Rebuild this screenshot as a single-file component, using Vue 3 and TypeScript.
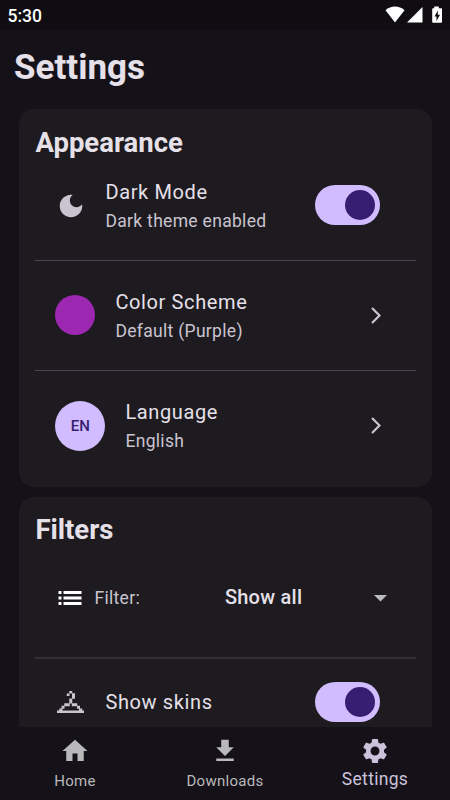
<script setup lang="ts">
import { ref } from 'vue'

interface Tab {
  id: string
  label: string
  icon: string
}

const tabs: Tab[] = [
  { id: 'home', label: 'Home', icon: 'M10 20v-6h4v6h5v-8h3L12 3 2 12h3v8z' },
  { id: 'downloads', label: 'Downloads', icon: 'M19 9h-4V3H9v6H5l7 7 7-7zM5 18v2h14v-2H5z' },
  {
    id: 'settings',
    label: 'Settings',
    icon: 'M19.14 12.94c.04-.3.06-.61.06-.94 0-.32-.02-.64-.07-.94l2.03-1.58c.18-.14.23-.41.12-.61l-1.92-3.32c-.12-.22-.37-.29-.59-.22l-2.39.96c-.5-.38-1.03-.7-1.62-.94l-.36-2.54c-.04-.24-.24-.41-.48-.41h-3.84c-.24 0-.43.17-.47.41l-.36 2.54c-.59.24-1.13.57-1.62.94l-2.39-.96c-.22-.08-.47 0-.59.22L2.74 8.87c-.12.21-.08.47.12.61l2.03 1.58c-.05.3-.09.63-.09.94s.02.64.07.94l-2.03 1.58c-.18.14-.23.41-.12.61l1.92 3.32c.12.22.37.29.59.22l2.39-.96c.5.38 1.03.7 1.62.94l.36 2.54c.05.24.24.41.48.41h3.84c.24 0 .44-.17.47-.41l.36-2.54c.59-.24 1.13-.56 1.62-.94l2.39.96c.22.08.47 0 .59-.22l1.92-3.32c.12-.22.07-.47-.12-.61l-2.01-1.58zM12 15.6c-1.98 0-3.6-1.62-3.6-3.6s1.62-3.6 3.6-3.6 3.6 1.62 3.6 3.6-1.62 3.6-3.6 3.6z',
  },
]

const activeTab = ref('settings')
const darkMode = ref(true)
const showSkins = ref(true)
</script>

<template>
  <div class="screen">
    <div class="status">
      <span class="clock">5:30</span>
      <svg class="status-icons" width="60" height="20" viewBox="0 0 60 20">
        <path d="M0.5 4.200C6 -0.600 14 -0.600 19.500 4.200L10 16.500z" />
        <path d="M37.500 1V16.500H22z" />
        <path
          fill-rule="evenodd"
          d="M49.200 .5h4.600v1.800h2.400q.8 0 .8.8V16q0 .8-.8.8h-8.200q-.8 0-.8-.8V3.100q0-.8.8-.8h1.200zM52.800 4.500L49.500 10.600h2v4.500L55 8.800h-2.200z"
        />
      </svg>
    </div>

    <h1 class="title">Settings</h1>

    <main class="content">
      <section class="card">
        <h2 class="heading">Appearance</h2>

        <div class="row mode">
          <svg class="moon" viewBox="0 0 24 24">
            <path d="M12 3c-4.970 0-9 4.030-9 9s4.030 9 9 9 9-4.030 9-9c0-.46-.04-.92-.1-1.360-.98 1.370-2.580 2.260-4.400 2.260-2.980 0-5.400-2.420-5.400-5.400 0-1.810.89-3.420 2.260-4.400C12.920 3.040 12.460 3 12 3z" />
          </svg>
          <div class="texts">
            <span class="label">Dark Mode</span>
            <span class="sub">Dark theme enabled</span>
          </div>
          <button class="switch" :class="{ on: darkMode }" aria-label="Dark Mode" @click="darkMode = !darkMode"></button>
        </div>

        <div class="row scheme">
          <span class="swatch"></span>
          <div class="texts">
            <span class="label">Color Scheme</span>
            <span class="sub">Default (Purple)</span>
          </div>
          <svg class="chevron" viewBox="0 0 10 17"><path d="M1 1L8.500 8.500L1 16" /></svg>
        </div>

        <div class="row language">
          <span class="badge">EN</span>
          <div class="texts">
            <span class="label">Language</span>
            <span class="sub">English</span>
          </div>
          <svg class="chevron" viewBox="0 0 10 17"><path d="M1 1L8.500 8.500L1 16" /></svg>
        </div>
      </section>

      <section class="card">
        <h2 class="heading">Filters</h2>

        <div class="row filter">
          <svg class="list" viewBox="0 0 23 14">
            <path d="M0 0h3v3H0zM5 0h18v3H5zM0 5.500h3v3H0zM5 5.500h18v3H5zM0 11h3v3H0zM5 11h18v3H5z" />
          </svg>
          <span class="sub filter-name">Filter:</span>
          <span class="filter-value">Show all</span>
          <svg class="caret" viewBox="0 0 13 7"><path d="M0 0h13L6.500 6.500z" /></svg>
        </div>

        <div class="row skins">
          <svg class="hanger" viewBox="0 0 11 9">
            <path d="M4.900 0h1.200v1H4.900zM3.900 1h1.100v1H3.900zM6 .9h1.200v2.200H6zM4.900 3h1.200v2H4.900zM2.900 4.900h2.200v1.200H2.900zM5.900 4.900h2.200v1.200H5.900zM1.800 5.900h1.200v1.200H1.800zM8 5.900h1.200v1.200H8zM.9 7h1.300v1H.9zM8.800 7h1.300v1H8.800zM0 7.800h11v1.200H0z" />
          </svg>
          <div class="texts"><span class="label">Show skins</span></div>
          <button class="switch" :class="{ on: showSkins }" aria-label="Show skins" @click="showSkins = !showSkins"></button>
        </div>
      </section>
    </main>

    <nav class="nav">
      <button
        v-for="tab in tabs"
        :key="tab.id"
        class="tab"
        :class="{ active: tab.id === activeTab }"
        @click="activeTab = tab.id"
      >
        <svg viewBox="0 0 24 24"><path :d="tab.icon" /></svg>
        <span>{{ tab.label }}</span>
      </button>
    </nav>
  </div>
</template>

<style>
body {
  background: #141218;
}
</style>

<style scoped>
.screen {
  display: flex;
  flex-direction: column;
  height: 800px;
  width: 450px;
  overflow: hidden;
  background: #141218;
  color: #e6e0e9;
  font-family: Roboto, 'Liberation Sans', sans-serif;
}

button {
  border: 0;
  padding: 0;
  font: inherit;
  color: inherit;
  background: none;
}

.status {
  flex: none;
  display: flex;
  justify-content: space-between;
  height: 30px;
  padding: 6px 5px 0 7.500px;
  box-sizing: border-box;
  background: #0f0d12;
  color: #fff;
}

.clock {
  font-size: 17.5px;
  font-weight: 500;
  line-height: 21px;
}

.status-icons {
  fill: #fff;
}

.title {
  flex: none;
  margin: 0;
  height: 79px;
  padding: 15px 14px 0;
  box-sizing: border-box;
  font-size: 35px;
  font-weight: 700;
  line-height: 45px;
}

.content {
  flex: 1;
  min-height: 0;
  overflow: hidden;
  display: flex;
  flex-direction: column;
  gap: 10px;
  padding: 0 18.500px 0 19px;
}

.card {
  flex: none;
  padding: 16px 16px 0 16.400px;
  border-radius: 15px;
  background: #1d1b20;
}

.card + .card {
  padding-top: 15.300px;
}

.heading {
  margin: 0;
  font-size: 27.500px;
  font-weight: 700;
  line-height: 35px;
}

.row {
  display: flex;
  align-items: center;
  box-sizing: border-box;
  padding: 0 35.500px 0 20px;
}

.mode {
  height: 101px;
  padding-bottom: 10px;
}

.mode,
.scheme {
  border-bottom: 1.500px solid #49454f;
}

.scheme {
  height: 110px;
  padding-bottom: 1px;
}

.language {
  height: 115.500px;
  padding-bottom: 6.500px;
}

.texts {
  flex: 1;
  display: flex;
  flex-direction: column;
}

.label {
  font-size: 20px;
  line-height: 30px;
  letter-spacing: 0.625px;
}

.sub {
  font-size: 17.500px;
  line-height: 27px;
  letter-spacing: 0.3125px;
  color: #cac4d0;
}

.texts .sub {
  margin-bottom: -1px;
  padding-top: 1px;
}

.moon {
  width: 30px;
  height: 30px;
  margin: 1px 19.500px 0 0.500px;
  fill: #cac4d0;
}

.swatch {
  width: 40px;
  height: 40px;
  margin-right: 20px;
  border-radius: 50%;
  background: #9c27b0;
}

.badge {
  display: grid;
  place-items: center;
  width: 50px;
  height: 50px;
  margin-right: 20px;
  border-radius: 50%;
  background: #d0bcff;
  color: #381e72;
  font-size: 15px;
  font-weight: 500;
  line-height: 18px;
}

.switch {
  display: flex;
  align-items: center;
  box-sizing: border-box;
  width: 65px;
  height: 40px;
  padding: 5px;
  border-radius: 20px;
  background: #49454f;
}

.switch::before {
  content: '';
  width: 30px;
  height: 30px;
  border-radius: 50%;
  background: #938f99;
}

.switch.on {
  justify-content: flex-end;
  background: #d0bcff;
}

.switch.on::before {
  background: #381e72;
}

.chevron {
  width: 10px;
  height: 17px;
  margin-right: -0.500px;
  fill: none;
  stroke: #cac4d0;
  stroke-width: 2.200;
}

.filter {
  height: 111.800px;
  padding: 0 29px 7px 23px;
  border-bottom: 2px solid #323035;
}

.list {
  width: 24px;
  height: 14px;
  margin-right: 12px;
  fill: #fff;
}

.filter-name {
  flex: none;
  width: 130.500px;
  padding-top: 1px;
}

.filter-value {
  flex: 1;
  margin-top: -1.500px;
  font-size: 20px;
  font-weight: 500;
  letter-spacing: 0.250px;
}

.caret {
  width: 13px;
  height: 7px;
  margin-top: 1px;
  fill: #bbb;
}

.skins {
  height: 87px;
}

.hanger {
  width: 27.500px;
  height: 22.500px;
  margin: 0 21.200px 0 1.300px;
  fill: #cac4d0;
}

.nav {
  flex: none;
  display: flex;
  height: 73px;
}

.tab {
  flex: 1;
  display: flex;
  flex-direction: column;
  align-items: center;
  padding-top: 9px;
  color: #b9b8ba;
}

.tab svg {
  width: 30px;
  height: 30px;
  fill: currentColor;
}

.tab span {
  margin-top: 5px;
  font-size: 15px;
  line-height: 20px;
  letter-spacing: 0.300px;
}

.tab.active {
  color: #ccc2dc;
}

.tab.active span {
  margin-top: 3px;
  font-size: 17.500px;
  letter-spacing: 0.300px;
}
</style>
